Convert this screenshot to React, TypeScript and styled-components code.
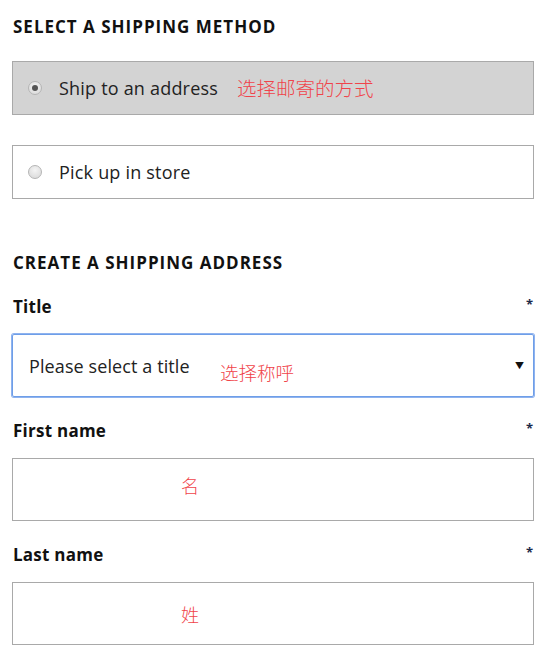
import React from 'react';
import styled, { createGlobalStyle } from 'styled-components';

const GlobalStyle = createGlobalStyle`
  html, body {
    margin: 0;
    padding: 0;
    background: #fff;
  }
  body {
    font-family: "Open Sans", "Noto Sans CJK SC", sans-serif;
    color: #1a1a1a;
  }
`;

const Page = styled.div`
  width: 522px;
  padding: 16px 0 0 12px;
`;

const SectionTitle = styled.h2<{ top?: number }>`
  margin: ${p => p.top ?? 0}px 0 0 1px;
  font-size: 17px;
  font-weight: 700;
  letter-spacing: 1px;
  line-height: 22px;
  color: #111;
`;

const OptionBox = styled.div<{ selected?: boolean; top: number }>`
  position: relative;
  margin-top: ${p => p.top}px;
  height: 52px;
  border: 1px solid #a9a9a9;
  background: ${p => (p.selected ? '#d3d3d3' : '#fff')};
  display: flex;
  align-items: center;
  padding-left: 15px;
`;

const Radio = styled.span<{ checked?: boolean }>`
  width: 14px;
  height: 14px;
  border-radius: 50%;
  border: 1px solid #b5b5b5;
  box-sizing: border-box;
  background: radial-gradient(circle at 50% 35%, #f4f4f4, #d6d6d6);
  display: flex;
  align-items: center;
  justify-content: center;
  &::after {
    content: '';
    display: ${p => (p.checked ? 'block' : 'none')};
    width: 6px;
    height: 6px;
    border-radius: 50%;
    background: #555;
  }
`;

const OptionText = styled.span`
  margin-left: 17px;
  font-size: 18px;
  letter-spacing: 0.2px;
  color: #222;
`;

const Note = styled.span<{ size?: number }>`
  position: absolute;
  font-family: "Noto Sans CJK SC", sans-serif;
  font-size: ${p => p.size ?? 18}px;
  font-weight: 300;
  color: #f0434a;
  line-height: 1;
`;

const Field = styled.div<{ top: number }>`
  margin-top: ${p => p.top}px;
`;

const LabelRow = styled.div`
  display: flex;
  justify-content: space-between;
  align-items: flex-start;
  padding: 0 1px;
`;

const Label = styled.label`
  font-size: 17px;
  font-weight: 700;
  letter-spacing: 0.25px;
  line-height: 22px;
  color: #111;
`;

const Required = styled.span`
  font-size: 13px;
  font-weight: 700;
  line-height: 16px;
  color: #1c2a4a;
  margin-right: 0;
`;

const InputBox = styled.div<{ focused?: boolean }>`
  position: relative;
  margin-top: 16px;
  height: 61px;
  border: ${p => (p.focused ? '1px solid #6e9ee8' : '1px solid #a9a9a9')};
  box-shadow: ${p => (p.focused ? '0 0 0 1px #8fb3ef' : 'none')};
  border-radius: ${p => (p.focused ? '2px' : '0')};
  display: flex;
  align-items: center;
  padding: 0 9px 0 16px;
`;

const SelectText = styled.span`
  flex: 1;
  font-size: 18px;
  letter-spacing: 0.1px;
  color: #222;
`;

const Caret = styled.span`
  font-size: 9px;
  color: #111;
`;

export default function App() {
  return (
    <>
      <GlobalStyle />
      <Page>
        <SectionTitle>SELECT A SHIPPING METHOD</SectionTitle>

        <OptionBox selected top={23}>
          <Radio checked />
          <OptionText>Ship to an address</OptionText>
          <Note size={19.5} style={{ left: 224, top: 16 }}>选择邮寄的方式</Note>
        </OptionBox>

        <OptionBox top={30}>
          <Radio />
          <OptionText>Pick up in store</OptionText>
        </OptionBox>

        <SectionTitle top={53}>CREATE A SHIPPING ADDRESS</SectionTitle>

        <Field top={22}>
          <LabelRow>
            <Label>Title</Label>
            <Required>*</Required>
          </LabelRow>
          <InputBox focused>
            <SelectText>Please select a title</SelectText>
            <Caret>▼</Caret>
            <Note size={18.5} style={{ left: 207, top: 28 }}>选择称呼</Note>
          </InputBox>
        </Field>

        <Field top={23}>
          <LabelRow>
            <Label>First name</Label>
            <Required>*</Required>
          </LabelRow>
          <InputBox>
            <Note style={{ left: 168, top: 17 }}>名</Note>
          </InputBox>
        </Field>

        <Field top={23}>
          <LabelRow>
            <Label>Last name</Label>
            <Required>*</Required>
          </LabelRow>
          <InputBox>
            <Note style={{ left: 168, top: 22 }}>姓</Note>
          </InputBox>
        </Field>
      </Page>
    </>
  );
}
